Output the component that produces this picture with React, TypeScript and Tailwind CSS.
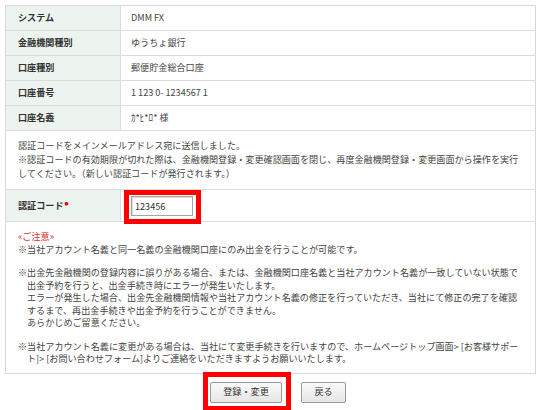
import type { ReactNode } from "react";

const rows = [
  { label: "システム", value: "DMM FX" },
  { label: "金融機関種別", value: "ゆうちょ銀行" },
  { label: "口座種別", value: "郵便貯金総合口座" },
  { label: "口座番号", value: "1 123 0- 1234567 1" },
  { label: "口座名義", value: "ｶ*ﾋ*ﾛ* 様" },
];

const Label = ({ children }: { children: ReactNode }) => (
  <div className="w-[115px] shrink-0 bg-[#edf3ee] border-r border-[#dcdcdc] pl-[12px] flex items-center font-bold text-[#333]">
    {children}
  </div>
);

const App = () => {
  return (
    <div
      className="w-[540px] h-[410px] bg-white pt-[5px] pl-[5px] text-[9.1px] text-[#444] overflow-hidden"
      style={{ fontFamily: '"Noto Sans CJK JP", "Noto Sans", sans-serif' }}
    >
      <div className="w-[531px] border border-[#d8d8d8]">
        {rows.map((r) => (
          <div key={r.label} className="flex h-[25px] border-b border-[#dcdcdc]">
            <Label>{r.label}</Label>
            <div className="flex items-center pl-[10px]">{r.value}</div>
          </div>
        ))}

        <div className="px-[12px] pt-[7px] pb-[9px] leading-[14px] border-b border-[#dcdcdc] whitespace-nowrap">
          <div>認証コードをメインメールアドレス宛に送信しました。</div>
          <div>※認証コードの有効期限が切れた際は、金融機関登録・変更確認画面を閉じ、再度金融機関登録・変更画面から操作を実行</div>
          <div>してください。（新しい認証コードが発行されます。）</div>
        </div>

        <div className="flex h-[32px] border-b border-[#dcdcdc]">
          <Label>
            認証コード<span className="text-[#e00] text-[4px] -mt-[3px] ml-[1px]">●</span>
          </Label>
          <div className="flex items-center pl-[10px]">
            <div className="relative">
              <input
                readOnly
                value="123456"
                className="w-[62px] h-[20px] border border-[#a5a5a5] shadow-[inset_1px_1px_1px_rgba(0,0,0,0.15)] px-[3px] text-[9.1px] text-[#333] outline-none"
              />
              <div className="absolute -left-[7px] -top-[6px] w-[77px] h-[34px] border-[5px] border-[#ff0000] pointer-events-none" />
            </div>
          </div>
        </div>

        <div className="px-[12px] pt-[8px] pb-[8px] leading-[12.5px] whitespace-nowrap">
          <div className="text-[#d9302c]">«ご注意»</div>
          <div>※当社アカウント名義と同一名義の金融機関口座にのみ出金を行うことが可能です。</div>
          <div className="h-[11px]" />
          <div>※出金先金融機関の登録内容に誤りがある場合、または、金融機関口座名義と当社アカウント名義が一致していない状態で</div>
          <div className="pl-[9px]">出金予約を行うと、出金手続き時にエラーが発生いたします。</div>
          <div className="pl-[9px]">エラーが発生した場合、出金先金融機関情報や当社アカウント名義の修正を行っていただき、当社にて修正の完了を確認</div>
          <div className="pl-[9px]">するまで、再出金手続きや出金予約を行うことができません。</div>
          <div className="pl-[9px]">あらかじめご留意ください。</div>
          <div className="h-[11px]" />
          <div>※当社アカウント名義に変更がある場合は、当社にて変更手続きを行いますので、ホームページトップ画面&gt; [お客様サポー</div>
          <div className="pl-[9px]">ト]&gt; [お問い合わせフォーム]よりご連絡をいただきますようお願いいたします。</div>
        </div>
      </div>

      <div className="flex pl-[205px] gap-[19px] mt-[8px]">
        <div className="relative">
          <button className="w-[72px] h-[21px] rounded-[2px] border border-[#9a9a9a] bg-gradient-to-b from-[#fafafa] to-[#e6e6e6] text-[9.1px] text-[#333]">
            登録・変更
          </button>
          <div className="absolute -left-[7px] -top-[10px] w-[88px] h-[39px] border-[5px] border-[#ff0000] pointer-events-none" />
        </div>
        <button className="w-[45px] h-[21px] rounded-[2px] border border-[#9a9a9a] bg-gradient-to-b from-[#fafafa] to-[#e6e6e6] text-[9.1px] text-[#333]">
          戻る
        </button>
      </div>
    </div>
  );
};

export default App;
